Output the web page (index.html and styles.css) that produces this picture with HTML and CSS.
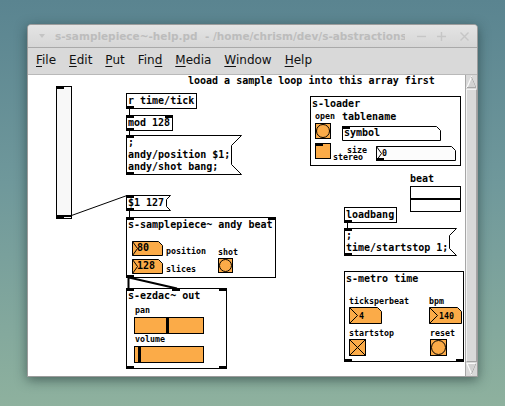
FILE: index.html
```html
<!DOCTYPE html>
<html lang="en">
<head>
<meta charset="utf-8">
<title>s-samplepiece~-help.pd</title>
<link rel="stylesheet" href="styles.css">
</head>
<body>
<div class="window">
  <div class="titlebar">
    <svg class="tb-arrow" width="6" height="4" viewBox="0 0 6 4"><path d="M0 0H6L3 4Z"/></svg>
    <div class="title">s-samplepiece~-help.pd  - /home/chrism/dev/s-abstractions</div>
    <svg class="tb-btn min" width="9" height="9" viewBox="0 0 9 9"><path d="M0 4.5H9"/></svg>
    <svg class="tb-btn plus" width="9" height="9" viewBox="0 0 9 9"><path d="M0 4.5H9M4.5 0V9"/></svg>
    <svg class="tb-btn close" width="9" height="9" viewBox="0 0 9 9"><path d="M.5 .5L8.5 8.5M8.5 .5L.5 8.5"/></svg>
  </div>
  <div class="menubar">
    <span class="mi"><u>F</u>ile</span>
    <span class="mi"><u>E</u>dit</span>
    <span class="mi"><u>P</u>ut</span>
    <span class="mi">Fin<u>d</u></span>
    <span class="mi"><u>M</u>edia</span>
    <span class="mi"><u>W</u>indow</span>
    <span class="mi"><u>H</u>elp</span>
  </div>
  <div class="main">
    <div class="canvas">
      <div class="node vsl n-vsl"><span class="io tl"></span><span class="vknob"></span><span class="io bl"></span></div>
      <div class="node comment n-comment">looad a sample loop into this array first</div>

      <div class="node obj n-rtick">r time/tick<span class="io bl"></span></div>
      <div class="node obj n-mod">mod 128<span class="io tl"></span><span class="io tr"></span><span class="io bl"></span></div>
      <div class="node msg n-msg1">
        <svg class="outline" width="116" height="40"><path d="M.5 .5H115.5L105.5 10.5V29.5L115.5 39.5H.5Z"/></svg>
        <span class="io tl"></span><span class="io bl"></span>
        <span class="txt">;<br>andy/position $1;<br>andy/shot bang;</span>
      </div>
      <div class="node msg n-msg2">
        <svg class="outline" width="45" height="16"><path d="M.5 .5H44.5L40.5 4.5V11.5L44.5 15.5H.5Z"/></svg>
        <span class="io tl"></span><span class="io bl"></span>
        <span class="txt">$1 127</span>
      </div>

      <div class="node gop n-sp">
        <span class="gtitle">s-samplepiece~ andy beat</span>
        <span class="io tl"></span><span class="io tr"></span><span class="io bl"></span>
        <div class="nbx sp-nbx80">
          <svg width="31" height="15"><path class="body orange" d="M.5 .5H26.5L30.5 4.5V14.5H.5Z"/><path class="tri" d="M.5 .5L5.5 7.5L.5 14.5"/></svg>
          <span class="num">80</span>
        </div>
        <div class="nbx sp-nbx128">
          <svg width="31" height="15"><path class="body orange" d="M.5 .5H26.5L30.5 4.5V14.5H.5Z"/><path class="tri" d="M.5 .5L5.5 7.5L.5 14.5"/></svg>
          <span class="num">128</span>
        </div>
        <span class="lbl sp-pos">position</span>
        <span class="lbl sp-sli">slices</span>
        <span class="lbl sp-shot">shot</span>
        <div class="bng sp-bng"></div>
      </div>

      <div class="node gop n-ez">
        <span class="gtitle">s-ezdac~ out</span>
        <span class="io tl"></span><span class="io tm"></span><span class="io tr"></span><span class="io bl"></span><span class="io br"></span>
        <span class="lbl ez-pan">pan</span>
        <div class="hsl ez-panslider"><span class="hknob k-pan"></span></div>
        <span class="lbl ez-vol">volume</span>
        <div class="hsl ez-volslider"><span class="hknob k-vol"></span></div>
      </div>

      <div class="node gop n-loader">
        <span class="gtitle">s-loader</span>
        <span class="lbl ld-open">open</span>
        <span class="lbl10 ld-table">tablename</span>
        <div class="bng ld-bng"></div>
        <div class="nbx ld-sym">
          <svg width="99" height="15"><path class="body white" d="M.5 .5H94.5L98.5 4.5V14.5H.5Z"/></svg>
          <span class="io tl"></span>
          <span class="symtxt">symbol</span>
        </div>
        <div class="tgl ld-tgl"><span class="io tl"></span></div>
        <span class="lbl ld-size">size</span>
        <span class="lbl ld-stereo">stereo</span>
        <div class="nbx ld-sizebox">
          <svg width="80" height="15"><path class="body light" d="M.5 .5H75.5L79.5 4.5V14.5H.5Z"/><path class="tri" d="M.5 .5L5.5 7.5L.5 14.5"/></svg>
          <span class="io bl"></span>
          <span class="num8 ld-zero">0</span>
        </div>
      </div>

      <div class="node lbl10 n-beatlbl">beat</div>
      <div class="node array n-beat"><span class="arrline"></span></div>

      <div class="node obj n-lb">loadbang<span class="io bl"></span></div>
      <div class="node msg n-msg3">
        <svg class="outline" width="113" height="28"><path d="M.5 .5H112.5L105.5 7.5V20.5L112.5 27.5H.5Z"/></svg>
        <span class="io tl"></span><span class="io bl"></span>
        <span class="txt">;<br>time/startstop 1;</span>
      </div>

      <div class="node gop n-metro">
        <span class="gtitle">s-metro time</span>
        <span class="io bl"></span><span class="io br"></span>
        <span class="lbl mt-tpb">ticksperbeat</span>
        <div class="nbx mt-nbx4">
          <svg width="33" height="17"><path class="body orange" d="M.5 .5H28.5L32.5 4.5V16.5H.5Z"/><path class="tri" d="M.5 .5L8.5 8.5L.5 16.5"/></svg>
          <span class="num8 mt-num">4</span>
        </div>
        <span class="lbl mt-bpm">bpm</span>
        <div class="nbx mt-nbx140">
          <svg width="33" height="17"><path class="body orange" d="M.5 .5H28.5L32.5 4.5V16.5H.5Z"/><path class="tri" d="M.5 .5L8.5 8.5L.5 16.5"/></svg>
          <span class="num8 mt-num">140</span>
        </div>
        <span class="lbl mt-ss">startstop</span>
        <div class="tgl mt-tgl"><svg width="15" height="15"><path d="M0 0L15 15M15 0L0 15"/></svg></div>
        <span class="lbl mt-reset">reset</span>
        <div class="bng mt-bng"></div>
      </div>

      <svg class="wires" width="437" height="301">
        <path class="w" d="M101.5 34V40M101.5 56V60M101.5 136V142M319.5 148V153"/>
        <path class="w" d="M43.5 140.5L99 120.5"/>
        <path class="sig" d="M100.5 202V213M101 202.5L149 213.5"/>
      </svg>
    </div>
    <div class="scrollbar">
      <div class="sb-btn">
        <svg width="11" height="14" viewBox="0 0 11 14"><path class="arr" d="M5.5 2L1 12.5H10Z"/><path class="arr-sh" d="M5.5 2L10 12.5H1"/></svg>
      </div>
      <div class="sb-thumb"></div>
      <div class="sb-btn">
        <svg width="11" height="14" viewBox="0 0 11 14"><path class="arr" d="M1 1.5H10L5.5 12Z"/><path class="arr-sh" d="M10 1.5L5.5 12"/></svg>
      </div>
    </div>
  </div>
</div>
</body>
</html>
```

FILE: styles.css
```css
html, body {
  margin: 0;
  padding: 0;
}
body {
  width: 505px;
  height: 406px;
  overflow: hidden;
  position: relative;
  background: linear-gradient(to bottom, #5a8490 0%, #6f989b 45%, #8eb19e 100%);
  font-family: "DejaVu Sans", sans-serif;
}

/* window chrome */
.window {
  position: absolute;
  left: 27px;
  top: 24px;
  width: 451px;
  height: 353px;
  box-sizing: border-box;
  border: 1px solid #9c9c9c;
  border-radius: 4px 4px 0 0;
  background: #d9d9d9;
  display: flex;
  flex-direction: column;
  box-shadow: 0 3px 12px rgba(20, 40, 40, 0.55);
}
.titlebar {
  height: 22px;
  flex: none;
  display: flex;
  align-items: center;
  background: linear-gradient(#e4e4e4, #d6d6d6);
  border-radius: 3px 3px 0 0;
  color: #bcbcbc;
  font: bold 10.5px/22px "DejaVu Sans", sans-serif;
}
.tb-arrow {
  flex: none;
  margin-left: 11px;
  fill: #c4c4c4;
}
.title {
  flex: none;
  margin-left: 10px;
  width: 350px;
  overflow: hidden;
  white-space: pre;
}
.tb-btn {
  flex: none;
  stroke: #c6c6c6;
  stroke-width: 1.4;
  fill: none;
}
.tb-btn.min { margin-left: 12px; }
.tb-btn.plus { margin-left: 11px; }
.tb-btn.close { margin-left: 14px; }

.menubar {
  flex: none;
  border-top: 1px solid #a9a9a9;
  border-bottom: 1px solid #b9b9b9;
  display: flex;
  gap: 13px;
  padding: 5px 0 0 8px;
  box-sizing: border-box;
  height: 28px;
  font-size: 12px;
  line-height: 15px;
  color: #111;
}
.mi u {
  text-underline-offset: 2px;
}

.main {
  flex: 1;
  display: flex;
  min-height: 0;
}

/* Pd canvas */
.canvas {
  position: relative;
  flex: 1;
  background: #fff;
  overflow: hidden;
  font-family: "DejaVu Sans Mono", monospace;
  font-weight: bold;
  font-size: 10px;
  line-height: 12px;
  color: #000;
}
.node {
  position: absolute;
  box-sizing: border-box;
}
.io {
  position: absolute;
  width: 8px;
  height: 3px;
  background: #000;
}
.io.tl { top: -1px; left: -1px; }
.io.tr { top: -1px; right: -1px; }
.io.bl { bottom: -1px; left: -1px; }
.io.br { bottom: -1px; right: -1px; }
.io.tm { top: -1px; left: 45px; }

.obj {
  border: 1px solid #000;
  height: 16px;
  padding: 1px 0 0 1px;
  white-space: nowrap;
  background: #fff;
}
.msg {
  border: 1px solid transparent;
  padding: 1px 0 0 1px;
  white-space: nowrap;
}
.outline {
  position: absolute;
  left: -1px;
  top: -1px;
}
.outline path {
  fill: #fff;
  stroke: #000;
  stroke-width: 1;
}
.txt {
  position: relative;
}
.comment {
  white-space: nowrap;
}

.gop {
  border: 1px solid #000;
  background: #fff;
}
.gtitle {
  position: absolute;
  left: 1px;
  top: 1px;
  white-space: nowrap;
}
.lbl {
  position: absolute;
  font-size: 8.3px;
  line-height: 8px;
  white-space: nowrap;
}
.lbl10 {
  position: absolute;
  font-size: 10px;
  line-height: 12px;
  white-space: nowrap;
}

.nbx {
  position: absolute;
  box-sizing: border-box;
  border: 1px solid transparent;
}
.nbx svg {
  position: absolute;
  left: -1px;
  top: -1px;
}
.nbx .body {
  stroke: #000;
  stroke-width: 1;
}
.nbx .orange { fill: #fbab48; }
.nbx .white { fill: #fff; }
.nbx .light { fill: #fcfcfc; }
.nbx .tri {
  fill: none;
  stroke: #000;
  stroke-width: 1;
}
.num {
  position: absolute;
  left: 4px;
  top: 0;
}
.num8 {
  position: absolute;
  font-size: 8.3px;
  line-height: 10px;
}
.symtxt {
  position: absolute;
  left: 1px;
  top: 0;
}

.bng, .tgl {
  position: absolute;
  box-sizing: border-box;
  border: 1px solid #000;
  background: #fbab48;
}
.bng::after {
  content: "";
  position: absolute;
  inset: 0;
  border: 1px solid #000;
  border-radius: 50%;
}
.tgl svg {
  position: absolute;
  left: 0;
  top: 0;
}
.tgl svg path {
  stroke: #000;
  stroke-width: 1;
  fill: none;
}

.hsl {
  position: absolute;
  box-sizing: border-box;
  width: 70px;
  height: 17px;
  border: 1px solid #000;
  background: #fbab48;
}
.hknob {
  position: absolute;
  top: 0;
  bottom: 0;
  width: 3px;
  background: #000;
}
.k-pan { left: 31px; }
.k-vol { left: 3px; }

.vsl {
  border: 1px solid #000;
  background: #f8f8f8;
}
.vknob {
  position: absolute;
  left: 0;
  right: 0;
  bottom: 1px;
  height: 2px;
  background: #000;
}

.array {
  border: 1px solid #000;
  background: #fff;
}
.arrline {
  position: absolute;
  left: 0;
  right: 0;
  top: 11px;
  height: 2px;
  background: #000;
}

.wires {
  position: absolute;
  left: 0;
  top: 0;
  pointer-events: none;
}
.wires .w {
  stroke: #000;
  stroke-width: 1;
  fill: none;
}
.wires .sig {
  stroke: #000;
  stroke-width: 2;
  fill: none;
}

/* node placement on the canvas */
.n-vsl { left: 28px; top: 11px; width: 16px; height: 133px; }
.n-comment { left: 160px; top: 0; }
.n-rtick { left: 98px; top: 18px; width: 71px; }
.n-mod { left: 98px; top: 40px; width: 47px; }
.n-msg1 { left: 98px; top: 60px; width: 116px; height: 40px; }
.n-msg2 { left: 98px; top: 120px; width: 45px; height: 16px; }
.n-sp { left: 98px; top: 142px; width: 150px; height: 61px; }
.n-ez { left: 98px; top: 213px; width: 101px; height: 81px; }
.n-loader { left: 282px; top: 21px; width: 151px; height: 70px; }
.n-beatlbl { left: 382px; top: 98px; }
.n-beat { left: 382px; top: 111px; width: 51px; height: 26px; }
.n-lb { left: 316px; top: 132px; width: 53px; }
.n-msg3 { left: 316px; top: 153px; width: 113px; height: 28px; }
.n-metro { left: 316px; top: 196px; width: 120px; height: 91px; }

/* inside s-samplepiece~ */
.sp-nbx80 { left: 5px; top: 23px; width: 31px; height: 15px; }
.sp-nbx128 { left: 5px; top: 41px; width: 31px; height: 15px; }
.sp-pos { left: 39px; top: 29px; }
.sp-sli { left: 39px; top: 47px; }
.sp-shot { left: 91px; top: 30px; }
.sp-bng { left: 91px; top: 40px; width: 15px; height: 15px; }

/* inside s-ezdac~ */
.ez-pan { left: 8px; top: 17px; }
.ez-panslider { left: 7px; top: 28px; }
.ez-vol { left: 8px; top: 46px; }
.ez-volslider { left: 7px; top: 57px; }

/* inside s-loader */
.ld-open { left: 4px; top: 15px; }
.ld-table { left: 31px; top: 14px; }
.ld-bng { left: 4px; top: 26px; width: 16px; height: 16px; }
.ld-sym { left: 31px; top: 29px; width: 99px; height: 15px; }
.ld-tgl { left: 4px; top: 46px; width: 16px; height: 16px; }
.ld-size { left: 36px; top: 49px; }
.ld-stereo { left: 22px; top: 57px; line-height: 7px; }
.ld-sizebox { left: 65px; top: 49px; width: 80px; height: 15px; }
.ld-zero { left: 5px; top: 1px; }

/* inside s-metro */
.mt-tpb { left: 4px; top: 25px; }
.mt-nbx4 { left: 4px; top: 35px; width: 33px; height: 17px; }
.mt-bpm { left: 84px; top: 25px; }
.mt-nbx140 { left: 84px; top: 35px; width: 33px; height: 17px; }
.mt-num { left: 9px; top: 3px; }
.mt-ss { left: 4px; top: 57px; }
.mt-tgl { left: 4px; top: 67px; width: 17px; height: 17px; }
.mt-reset { left: 85px; top: 57px; }
.mt-bng { left: 85px; top: 67px; width: 17px; height: 17px; }

/* scrollbar */
.scrollbar {
  width: 12px;
  flex: none;
  box-sizing: border-box;
  border-left: 1px solid #a6a6a6;
  background: #cfcfcf;
  display: flex;
  flex-direction: column;
}
.sb-btn {
  height: 14px;
  flex: none;
  background: #d9d9d9;
}
.sb-btn svg {
  display: block;
}
.sb-btn .arr {
  fill: #d2d2d2;
  stroke: #fbfbfb;
  stroke-width: 1.2;
}
.sb-btn .arr-sh {
  fill: none;
  stroke: #a8a8a8;
  stroke-width: 1;
}
.sb-thumb {
  flex: 1;
  box-sizing: border-box;
  border: 1px solid;
  border-color: #f3f3f3 #a4a4a4 #a4a4a4 #f3f3f3;
  background: #d9d9d9;
}
```
